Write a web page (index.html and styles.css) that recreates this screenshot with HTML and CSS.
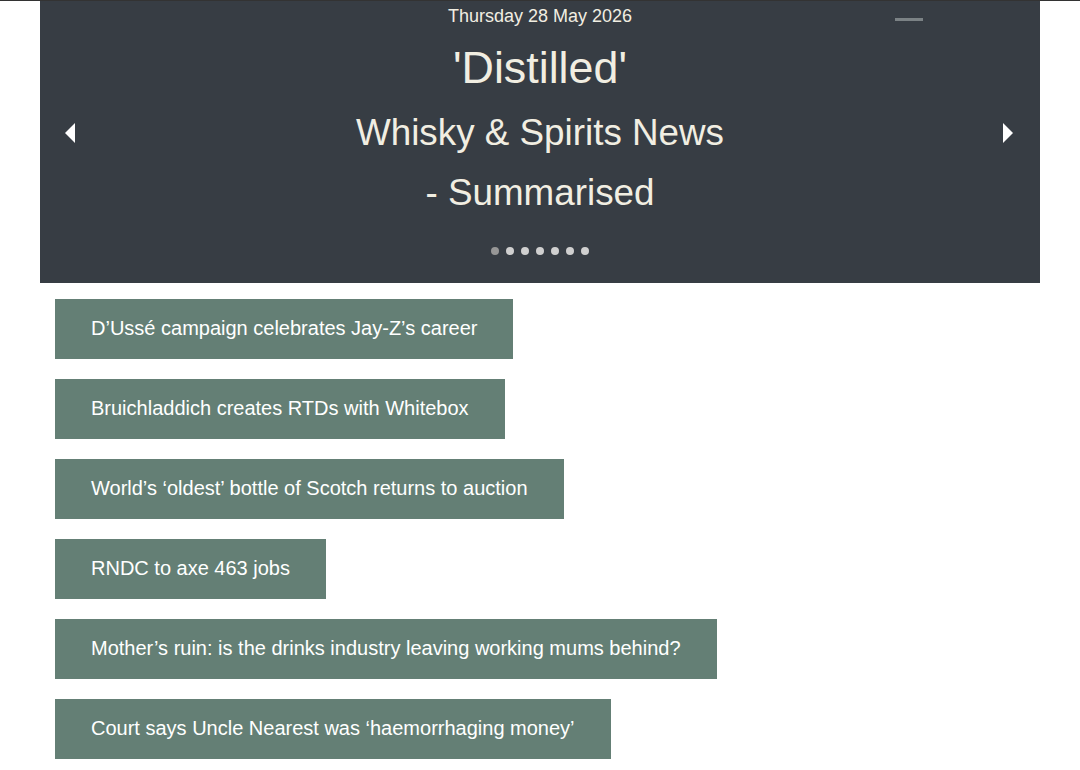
FILE: index.html
```html
<!DOCTYPE html>
<html lang="en">
<head>
<meta charset="utf-8">
<title>'Distilled' - Whisky &amp; Spirits News</title>
<link rel="stylesheet" href="styles.css">
</head>
<body>
<div class="topline"></div>
<header class="hero">
  <button class="arrow prev" aria-label="Previous">
    <svg width="12" height="20" viewBox="0 0 12 20"><polygon points="11,0 11,20 1,10" fill="#fff"/></svg>
  </button>
  <div class="hero-body">
    <div class="date">Thursday 28 May 2026</div>
    <h1 class="title">'Distilled'</h1>
    <div class="sub first">Whisky &amp; Spirits News</div>
    <div class="sub">- Summarised</div>
    <div class="dots">
      <span class="dot active"></span><span class="dot"></span><span class="dot"></span><span class="dot"></span><span class="dot"></span><span class="dot"></span><span class="dot"></span>
    </div>
  </div>
  <button class="arrow next" aria-label="Next">
    <svg width="12" height="20" viewBox="0 0 12 20"><polygon points="1,0 1,20 11,10" fill="#fff"/></svg>
  </button>
  <span class="minimize"></span>
</header>
<main class="list">
  <a class="story">D’Ussé campaign celebrates Jay-Z’s career</a>
  <a class="story">Bruichladdich creates RTDs with Whitebox</a>
  <a class="story">World’s ‘oldest’ bottle of Scotch returns to auction</a>
  <a class="story">RNDC to axe 463 jobs</a>
  <a class="story">Mother’s ruin: is the drinks industry leaving working mums behind?</a>
  <a class="story">Court says Uncle Nearest was ‘haemorrhaging money’</a>
</main>
</body>
</html>
```

FILE: styles.css
```css
html, body {
  margin: 0;
  padding: 0;
  background: #fff;
  font-family: "Liberation Sans", Arial, sans-serif;
}

.topline {
  height: 1px;
  background: #333;
}

.hero {
  position: relative;
  margin: 0 40px;
  height: 282px;
  background: #373d44;
  color: #f1eee2;
  display: flex;
  align-items: flex-start;
}

.hero-body {
  flex: 1;
  display: flex;
  flex-direction: column;
  align-items: center;
  text-align: center;
}

.date {
  font-size: 18px;
  line-height: 22px;
  margin-top: 4px;
}

.title {
  margin: 15px 0 0;
  font-weight: normal;
  font-size: 44.8px;
  line-height: 50px;
}

.sub {
  font-size: 36.8px;
  line-height: 60px;
}

.sub.first {
  margin-top: 11px;
}

.dots {
  display: flex;
  gap: 7px;
  margin-top: 24px;
}

.dot {
  width: 8px;
  height: 8px;
  border-radius: 50%;
  background: #d0d0d0;
}

.dot.active {
  background: #979797;
}

.arrow {
  background: none;
  border: 0;
  padding: 0;
  margin-top: 122px;
  width: 60px;
  display: flex;
  cursor: pointer;
}

.arrow.prev {
  justify-content: flex-start;
  padding-left: 24px;
}

.arrow.next {
  justify-content: flex-end;
  padding-right: 26px;
}

.minimize {
  position: absolute;
  top: 17px;
  left: 855px;
  width: 28px;
  height: 3px;
  background: #7b8285;
}

.list {
  display: flex;
  flex-direction: column;
  align-items: flex-start;
  gap: 20px;
  padding: 16px 55px 20px;
}

.story {
  display: block;
  box-sizing: border-box;
  background: #647f75;
  color: #fff;
  font-size: 20px;
  line-height: 58px;
  height: 60px;
  padding: 0 36px;
  text-decoration: none;
}
```
